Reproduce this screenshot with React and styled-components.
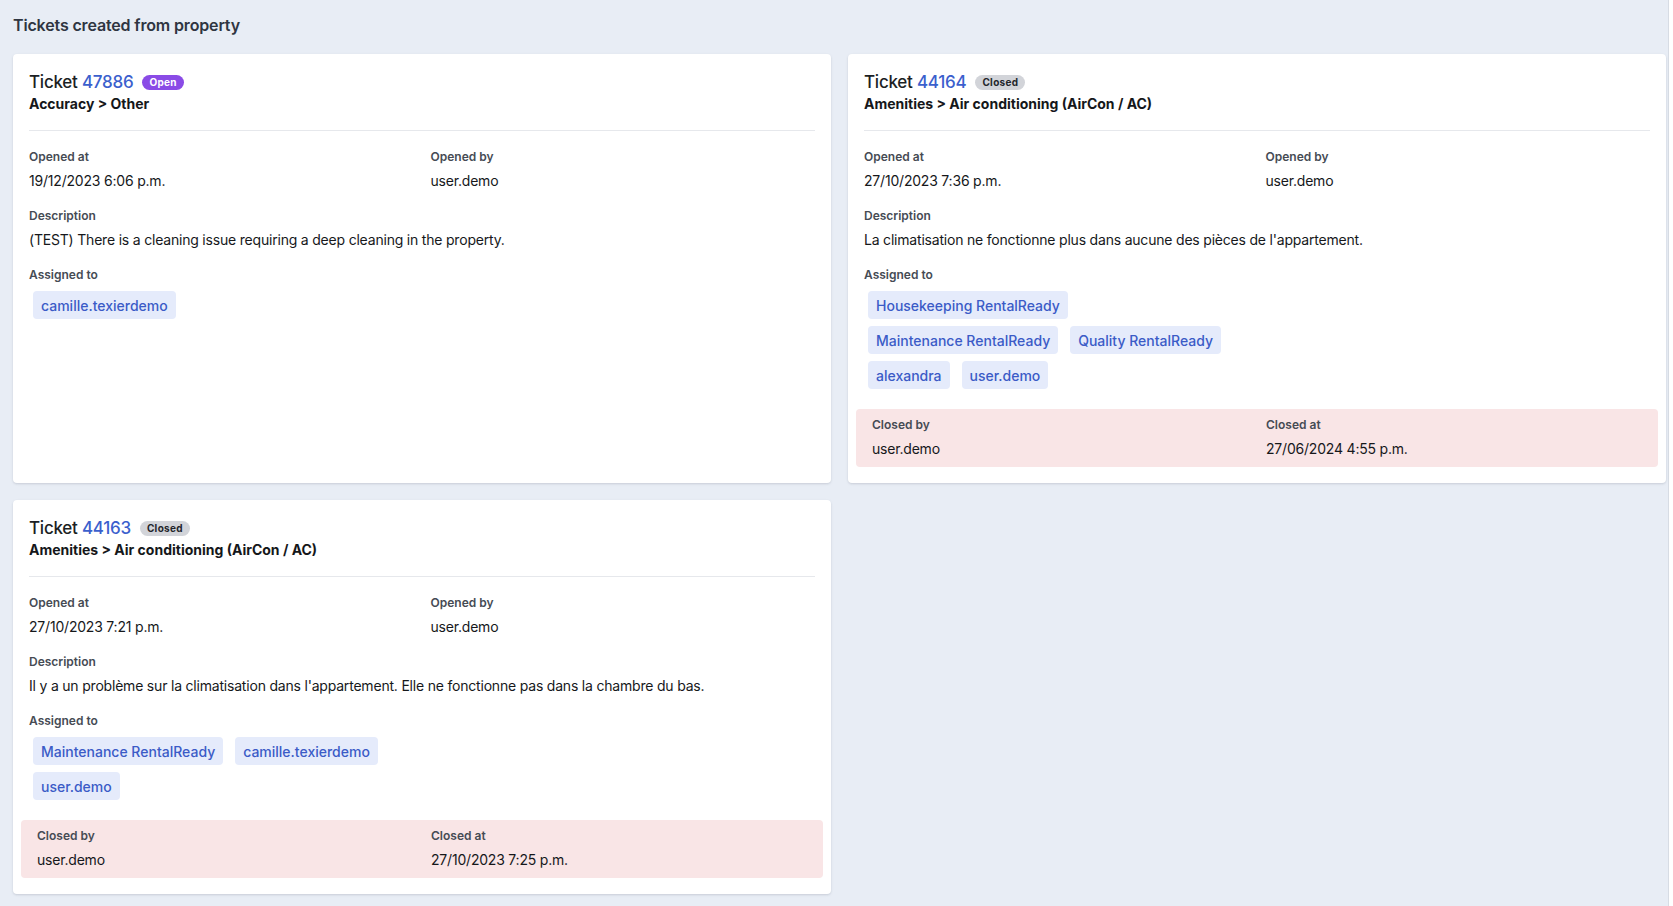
import React from 'react';
import styled, { createGlobalStyle } from 'styled-components';

const tickets = [
  {
    id: '47886',
    status: 'open',
    category: 'Accuracy > Other',
    openedAt: '19/12/2023 6:06 p.m.',
    openedBy: 'user.demo',
    description: '(TEST) There is a cleaning issue requiring a deep cleaning in the property.',
    assignees: ['camille.texierdemo'],
  },
  {
    id: '44164',
    status: 'closed',
    category: 'Amenities > Air conditioning (AirCon / AC)',
    openedAt: '27/10/2023 7:36 p.m.',
    openedBy: 'user.demo',
    description: "La climatisation ne fonctionne plus dans aucune des pièces de l'appartement.",
    assignees: [['Housekeeping RentalReady'], ['Maintenance RentalReady', 'Quality RentalReady'], ['alexandra', 'user.demo']],
    closedBy: 'user.demo',
    closedAt: '27/06/2024 4:55 p.m.',
  },
  {
    id: '44163',
    status: 'closed',
    category: 'Amenities > Air conditioning (AirCon / AC)',
    openedAt: '27/10/2023 7:21 p.m.',
    openedBy: 'user.demo',
    description: "Il y a un problème sur la climatisation dans l'appartement. Elle ne fonctionne pas dans la chambre du bas.",
    assignees: [['Maintenance RentalReady', 'camille.texierdemo'], ['user.demo']],
    closedBy: 'user.demo',
    closedAt: '27/10/2023 7:25 p.m.',
  },
];

const GlobalStyle = createGlobalStyle`
  html, body {
    margin: 0;
    padding: 0;
    background: #ffffff;
  }
  body {
    font-family: Inter, "Noto Sans", sans-serif;
    color: #1c1f24;
    -webkit-font-smoothing: antialiased;
  }
`;

const Page = styled.div`
  width: 1669px;
  min-height: 906px;
  box-sizing: border-box;
  background: #e8edf5;
  border-right: 1px solid #d7dce4;
  padding: 13px 0 12px 13px;
`;

const Heading = styled.h2`
  margin: 0 0 17px;
  font-size: 16px;
  line-height: 24px;
  font-weight: 600;
  letter-spacing: -0.15px;
  color: #2f3541;
`;

const Grid = styled.div`
  display: grid;
  grid-template-columns: repeat(2, 818px);
  column-gap: 17px;
  row-gap: 17px;
  align-items: stretch;
`;

const Card = styled.section`
  background: #fff;
  border-radius: 4px;
  box-shadow: 0 1px 3px rgba(30, 41, 59, 0.1), 0 1px 2px rgba(30, 41, 59, 0.06);
  padding: 16px;
  display: flex;
  flex-direction: column;
`;

const Header = styled.header`
  padding-bottom: 16px;
  border-bottom: 1px solid #e6e8ec;
  margin-bottom: 18px;
`;

const TitleRow = styled.div`
  display: flex;
  align-items: center;
  gap: 9px;
  font-size: 17px;
  line-height: 24px;
  font-weight: 500;
  letter-spacing: -0.25px;
  color: #1c1f24;
`;

const TicketLink = styled.span`
  color: #3b5fcd;
`;

const Badge = styled.span`
  display: inline-flex;
  align-items: center;
  height: 15px;
  padding: 0 7px;
  border-radius: 8px;
  font-size: 10px;
  font-weight: 700;
  letter-spacing: 0.3px;
  background: ${p => (p.$status === 'open' ? '#8a4be6' : '#d2d4d9')};
  color: ${p => (p.$status === 'open' ? '#ffffff' : '#23262b')};
`;

const Category = styled.div`
  font-size: 14px;
  line-height: 20px;
  font-weight: 700;
  color: #15171a;
`;

const Columns = styled.div`
  display: grid;
  grid-template-columns: 1fr 1fr;
  column-gap: 17px;
`;

const Field = styled.div`
  display: flex;
  flex-direction: column;
  gap: 6px;
  margin-bottom: ${p => (p.$last ? '0' : '17px')};
`;

const Label = styled.div`
  font-size: 12px;
  line-height: 16px;
  font-weight: 600;
  color: #464b54;
`;

const Value = styled.div`
  font-size: 14px;
  line-height: 20px;
  letter-spacing: -0.2px;
  color: #16181b;
`;

const Chips = styled.div`
  display: flex;
  flex-direction: column;
  gap: 7px;
  margin-top: 2px;
  padding-left: 4px;
`;

const ChipRow = styled.div`
  display: flex;
  gap: 12px;
`;

const Chip = styled.span`
  display: inline-flex;
  align-items: center;
  height: 28px;
  padding: 0 8px;
  border-radius: 4px;
  background: #e5ebfb;
  color: #3b5bc7;
  font-size: 14px;
  font-weight: 500;
`;

const ClosedBox = styled.div`
  margin: 20px -8px 0;
  padding: 8px 16px;
  background: #f9e5e6;
  border-radius: 4px;
  display: grid;
  grid-template-columns: 385px 1fr;
  column-gap: 9px;
`;

const TicketCard = ({ ticket }) => {
  const rows = Array.isArray(ticket.assignees[0]) ? ticket.assignees : [ticket.assignees];
  return (
    <Card>
      <Header>
        <TitleRow>
          <span>
            Ticket <TicketLink>{ticket.id}</TicketLink>
          </span>
          <Badge $status={ticket.status}>{ticket.status === 'open' ? 'Open' : 'Closed'}</Badge>
        </TitleRow>
        <Category>{ticket.category}</Category>
      </Header>

      <Columns>
        <Field>
          <Label>Opened at</Label>
          <Value>{ticket.openedAt}</Value>
        </Field>
        <Field>
          <Label>Opened by</Label>
          <Value>{ticket.openedBy}</Value>
        </Field>
      </Columns>

      <Field>
        <Label>Description</Label>
        <Value>{ticket.description}</Value>
      </Field>

      <Field $last>
        <Label>Assigned to</Label>
        <Chips>
          {rows.map((row, i) => (
            <ChipRow key={i}>
              {row.map(name => (
                <Chip key={name}>{name}</Chip>
              ))}
            </ChipRow>
          ))}
        </Chips>
      </Field>

      {ticket.closedBy && (
        <ClosedBox>
          <Field $last>
            <Label>Closed by</Label>
            <Value>{ticket.closedBy}</Value>
          </Field>
          <Field $last>
            <Label>Closed at</Label>
            <Value>{ticket.closedAt}</Value>
          </Field>
        </ClosedBox>
      )}
    </Card>
  );
};

const App = () => (
  <>
    <GlobalStyle />
    <Page>
      <Heading>Tickets created from property</Heading>
      <Grid>
        {tickets.map(t => (
          <TicketCard key={t.id} ticket={t} />
        ))}
      </Grid>
    </Page>
  </>
);

export default App;
